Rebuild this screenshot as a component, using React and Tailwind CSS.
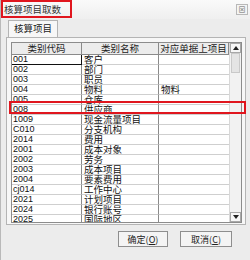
import React from 'react';

const rows = [
    ['001', '客户', ''],
    ['002', '部门', ''],
    ['003', '职员', ''],
    ['004', '物料', '物料'],
    ['005', '仓库', ''],
    ['008', '供应商', ''],
    ['1009', '现金流量项目', ''],
    ['C010', '分支机构', ''],
    ['2014', '费用', ''],
    ['2001', '成本对象', ''],
    ['2002', '劳务', ''],
    ['2003', '成本项目', ''],
    ['2004', '要素费用', ''],
    ['cj014', '工作中心', ''],
    ['2021', '计划项目', ''],
    ['2024', '银行账号', ''],
    ['2025', '国际地区', ''],
];

const cjk = "font-['Noto_Sans_CJK_SC',sans-serif]";

const App = () => {
    return (
        <div className={`w-[250px] h-[260px] bg-[#ececec] border-l border-[#b9b9b9] flex flex-col overflow-hidden ${cjk}`}>
            {/* title bar */}
            <div className="relative h-[19px] shrink-0 flex items-center justify-between bg-gradient-to-b from-[#fafafa] to-[#efefef]">
                <span className="pl-[3px] text-[9.5px] leading-none text-[#333]">核算项目取数</span>
                <div className="mr-[2px] w-[12px] h-[11px] border border-[#b8b8b8] bg-[#f4f4f4] flex items-center justify-center text-[7px] leading-none text-[#666]">⊠</div>
                <div className="absolute left-0 top-0 w-[71px] h-[18px] border-2 border-[#e0161e]"></div>
            </div>

            {/* tab strip */}
            <div className="h-[18px] shrink-0 flex items-end pl-[7px]">
                <div className="h-[17px] px-[5px] border border-b-0 border-[#b4b4b4] bg-[#f7f7f7] flex items-center text-[9.5px] leading-none text-[#222]">
                    核算项目
                </div>
            </div>

            {/* panel */}
            <div className="relative mr-[4px] ml-[5px] h-[188px] shrink-0 border border-[#b4b4b4] bg-[#f7f7f7] pt-[4px] pl-[4px] pr-[3px]">
                <div className="flex h-[181px] border border-[#8c8c8c] bg-white overflow-hidden">
                    <div className="flex-1 flex flex-col">
                        {/* header */}
                        <div className="flex h-[12px] shrink-0 bg-[#ececec] text-[9.5px] leading-none text-[#222] whitespace-nowrap">
                            <div className="w-[70px] overflow-hidden border-r border-b border-[#8a8a8a] flex items-center justify-center">类别代码</div>
                            <div className="w-[77px] overflow-hidden border-r border-b border-[#8a8a8a] flex items-center justify-center">类别名称</div>
                            <div className="flex-1 overflow-hidden border-r border-b border-[#8a8a8a] flex items-center justify-center">对应单据上项目</div>
                        </div>
                        {rows.map((r, i) => (
                            <div key={r[0]} className="flex h-[10px] shrink-0 text-[9.5px] leading-[9px] text-[#111] whitespace-nowrap">
                                <div className={`w-[70px] overflow-hidden border-b flex items-center pl-[1px] font-['Liberation_Sans',sans-serif] text-[9px] ${i === 0 ? 'border-r border-b-[#111] border-r-[#111]' : 'border-r border-[#8a8a8a] border-b-[#cfcfcf]'}`}>{r[0]}</div>
                                <div className="w-[77px] overflow-hidden border-r border-b border-r-[#8a8a8a] border-b-[#cfcfcf] flex items-center pl-[2px]">{r[1]}</div>
                                <div className="flex-1 overflow-hidden border-b border-b-[#cfcfcf] flex items-center pl-[2px]">{r[2]}</div>
                            </div>
                        ))}
                    </div>
                    {/* scrollbar */}
                    <div className="w-[12px] shrink-0 flex flex-col bg-[#f2f2f2] border-l border-[#d8d8d8]">
                        <div className="h-[10px] border border-[#a8a8a8] bg-[#f7f7f7] flex items-center justify-center">
                            <svg width="6" height="4" viewBox="0 0 6 4"><path d="M0 4 L3 0 L6 4 Z" fill="#222" /></svg>
                        </div>
                        <div className="h-[20px] mx-[1px] border border-[#c9c9c9] bg-[#e4e4e4]"></div>
                        <div className="flex-1"></div>
                        <div className="h-[10px] border border-[#a8a8a8] bg-[#f7f7f7] flex items-center justify-center">
                            <svg width="6" height="4" viewBox="0 0 6 4"><path d="M0 0 L3 4 L6 0 Z" fill="#222" /></svg>
                        </div>
                    </div>
                </div>
                <div className="absolute left-[2px] top-[63px] w-[237px] h-[13px] border-2 border-[#e0161e]"></div>
            </div>

            {/* buttons */}
            <div className="flex justify-end gap-[12px] pr-[18px] pt-[6px]">
                <button className="w-[50px] h-[16px] border border-[#8e8e8e] bg-[#f4f4f4] text-[9px] leading-none text-[#222] flex items-center justify-center">确定(<span className="underline">O</span>)</button>
                <button className="w-[52px] h-[16px] border border-[#8e8e8e] bg-[#f4f4f4] text-[9px] leading-none text-[#222] flex items-center justify-center">取消(<span className="underline">C</span>)</button>
            </div>
        </div>
    );
};

export default App;
